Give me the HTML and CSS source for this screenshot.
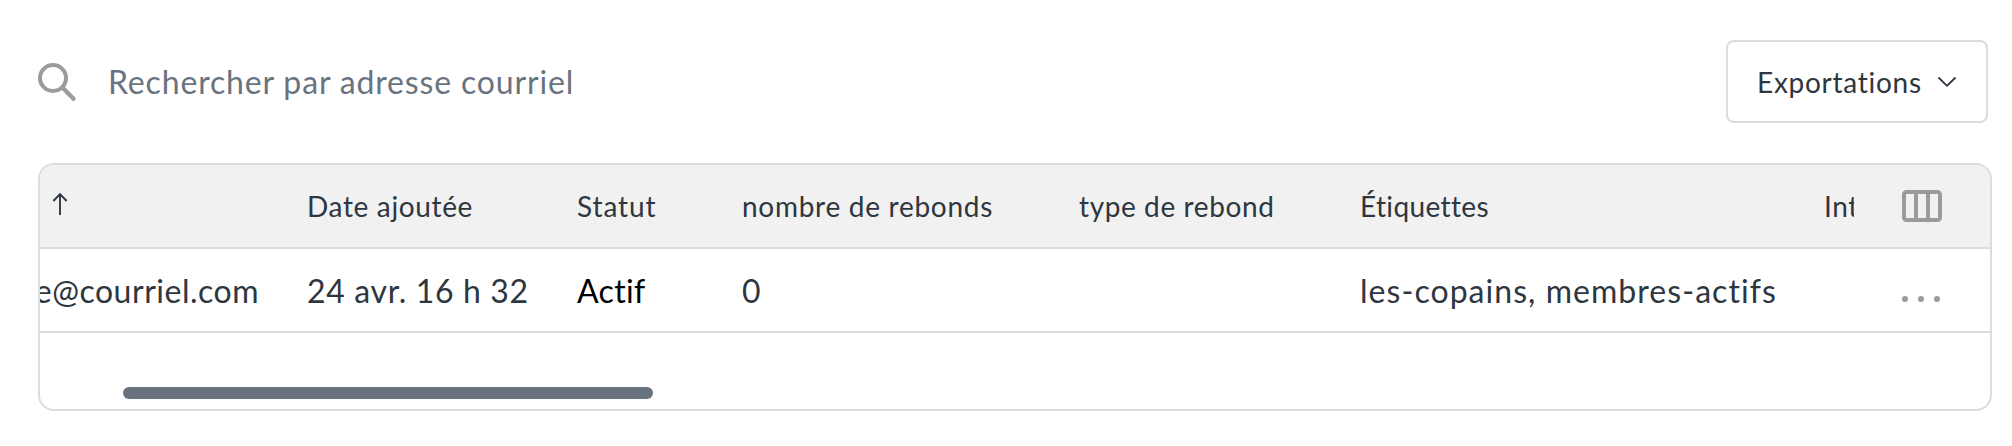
FILE: index.html
```
<!DOCTYPE html>
<html lang="fr">
<head>
<meta charset="utf-8">
<title>Abonnés</title>
<link rel="stylesheet" href="styles.css">
</head>
<body>
<main class="page">
  <div class="toolbar">
    <label class="search">
      <svg class="search-icon" width="40" height="40" viewBox="0 0 40 40"><circle cx="15" cy="16" r="13" fill="none" stroke="currentColor" stroke-width="4"/><path d="M24.5 25.5L35.5 36.8" stroke="currentColor" stroke-width="4.2" stroke-linecap="round"/></svg>
      <span class="search-text">Rechercher par adresse courriel</span>
    </label>
    <button class="export" type="button">
      <span class="export-text">Exportations</span>
      <svg class="chevron" width="20" height="12" viewBox="0 0 20 12"><path d="M1.5 1.5L10 9.8L18.5 1.5" fill="none" stroke="currentColor" stroke-width="1.8"/></svg>
    </button>
  </div>
  <section class="card">
    <div class="row head">
      <div class="cells">
        <div class="cell sort"><svg width="16" height="24" viewBox="0 0 16 24"><path d="M8 23V2M1.4 9L8 2.2L14.6 9" fill="none" stroke="currentColor" stroke-width="1.9"/></svg></div>
        <div class="cell date">Date ajoutée</div>
        <div class="cell status">Statut</div>
        <div class="cell count">nombre de rebonds</div>
        <div class="cell kind">type de rebond</div>
        <div class="cell tags">Étiquettes</div>
        <div class="cell int">Int</div>
      </div>
      <div class="actions"><svg class="columns-icon" width="40" height="32" viewBox="0 0 40 32"><rect x="2" y="2" width="36" height="28" rx="2.5" fill="none" stroke="currentColor" stroke-width="4"/><path d="M14 2V30M26 2V30" stroke="currentColor" stroke-width="4"/></svg></div>
    </div>
    <div class="row">
      <div class="cells">
        <div class="cell email">e@courriel.com</div>
        <div class="cell date">24 avr. 16 h 32</div>
        <div class="cell status active">Actif</div>
        <div class="cell count">0</div>
        <div class="cell kind"></div>
        <div class="cell tags">les-copains, membres-actifs</div>
        <div class="cell int"></div>
      </div>
      <div class="actions"><svg class="more-icon" width="40" height="8" viewBox="0 0 40 8"><g fill="currentColor"><circle cx="3" cy="4" r="3"/><circle cx="19" cy="4" r="3"/><circle cx="35" cy="4" r="3"/></g></svg></div>
    </div>
    <div class="scroll"><div class="thumb"></div></div>
  </section>
</main>
</body>
</html>
```

FILE: styles.css
```
* { box-sizing: border-box; }
body {
  margin: 0;
  background: #fff;
  color: #2e3640;
  font-family: Lato, "Open Sans", sans-serif;
}
.page { padding: 40px 20px 0 38px; }

.toolbar {
  display: flex;
  justify-content: space-between;
  align-items: center;
  height: 83px;
  padding-right: 4px;
}
.search { display: flex; align-items: center; gap: 30px; }
.search-icon { color: #9b9b9b; }
.search-text {
  font-size: 32px;
  line-height: 40px;
  letter-spacing: 0.84px;
  color: #69737f;
  white-space: nowrap;
}
.export {
  display: flex;
  align-items: center;
  gap: 15px;
  width: 262px;
  height: 83px;
  padding: 0 0 0 29px;
  border: 2px solid #dcdcdc;
  border-radius: 8px;
  background: #fff;
  color: inherit;
  font: 28px/36px Lato, "Open Sans", sans-serif;
}
.export-text { letter-spacing: 0.73px; }

.card {
  height: 248px;
  margin-top: 40px;
  border: 2px solid #dcdcdc;
  border-radius: 16px;
  overflow: hidden;
}
.row {
  display: flex;
  height: 84px;
  border-bottom: 2px solid #dcdcdc;
  font-size: 32px;
}
.head { background: #f1f1f1; font-size: 28px; }
.cells {
  display: grid;
  grid-template-columns: 267px 269px 165px 338px 280px 465px 200px;
  flex: none;
  width: 1814px;
  overflow: hidden;
}
.cell {
  display: flex;
  align-items: center;
  overflow: hidden;
  white-space: nowrap;
}
.sort { padding: 0 0 4px 12px; }
.email {
  justify-content: flex-end;
  padding-right: 48px;
  letter-spacing: 0.51px;
}
.date { letter-spacing: 0.65px; }
.status { padding-left: 1px; letter-spacing: 0.35px; }
.head .status { letter-spacing: 0.9px; }
.active { color: #000; }
.count { padding-left: 1px; letter-spacing: 0.72px; }
.kind { letter-spacing: 0.6px; }
.tags { padding-left: 1px; letter-spacing: 1.05px; }
.head .tags { letter-spacing: 0.38px; }
.int { letter-spacing: 0.6px; }

.actions {
  display: flex;
  align-items: center;
  padding-left: 48px;
  color: #9b9b9b;
}
.more-icon { margin-top: 18px; }
.scroll { padding: 54px 0 0 83px; }
.thumb {
  width: 530px;
  height: 12px;
  border-radius: 6px;
  background: #69737f;
}
```
